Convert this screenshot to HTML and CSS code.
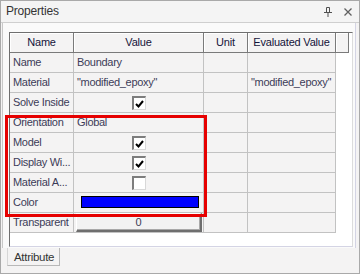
FILE: index.html
```html
<!DOCTYPE html>
<html>
<head>
<meta charset="utf-8">
<link rel="stylesheet" href="styles.css">
</head>
<body>
<div class="window">
  <div class="titlebar">
    <span class="title">Properties</span>
    <span class="tools">
      <svg class="pin" width="8" height="10" viewBox="0 0 8 10"><path d="M2.5 0.5h3v5h-3z M0 5.5h8 M4 6v4" fill="none" stroke="#505050" stroke-width="1"/></svg>
      <svg class="close" width="8" height="8" viewBox="0 0 8 8"><path d="M0.5 0.5L7.5 7.5M7.5 0.5L0.5 7.5" stroke="#606060" stroke-width="1.3"/></svg>
    </span>
  </div>
  <div class="body">
    <div class="pane">
      <div class="gridbox">
        <div class="hrow">
          <div class="hcell">Name</div>
          <div class="hcell">Value</div>
          <div class="hcell">Unit</div>
          <div class="hcell">Evaluated Value</div>
          <div class="hcell"></div>
        </div>
        <div class="row"><div class="cell">Name</div><div class="cell">Boundary</div><div class="cell"></div><div class="cell"></div></div>
        <div class="row"><div class="cell">Material</div><div class="cell">"modified_epoxy"</div><div class="cell"></div><div class="cell">"modified_epoxy"</div></div>
        <div class="row"><div class="cell">Solve Inside</div><div class="cell center"><span class="cb"><svg width="9" height="8" viewBox="0 0 9 8"><path d="M1 4l2.5 2.5L8 1" fill="none" stroke="#000" stroke-width="2"/></svg></span></div><div class="cell"></div><div class="cell"></div></div>
        <div class="row"><div class="cell">Orientation</div><div class="cell">Global</div><div class="cell"></div><div class="cell"></div></div>
        <div class="row"><div class="cell">Model</div><div class="cell center"><span class="cb"><svg width="9" height="8" viewBox="0 0 9 8"><path d="M1 4l2.5 2.5L8 1" fill="none" stroke="#000" stroke-width="2"/></svg></span></div><div class="cell"></div><div class="cell"></div></div>
        <div class="row"><div class="cell">Display Wi...</div><div class="cell center"><span class="cb"><svg width="9" height="8" viewBox="0 0 9 8"><path d="M1 4l2.5 2.5L8 1" fill="none" stroke="#000" stroke-width="2"/></svg></span></div><div class="cell"></div><div class="cell"></div></div>
        <div class="row"><div class="cell">Material A...</div><div class="cell center"><span class="cb"></span></div><div class="cell"></div><div class="cell"></div></div>
        <div class="row"><div class="cell">Color</div><div class="cell colorcell"><span class="swatch"></span></div><div class="cell"></div><div class="cell"></div></div>
        <div class="row"><div class="cell">Transparent</div><div class="cell btncell"><span class="btn">0</span></div><div class="cell"></div><div class="cell"></div></div>
      </div>
    </div>
    <div class="tabs"><div class="tab">Attribute</div></div>
  </div>
  <div class="highlight"></div>
</div>
</body>
</html>
```

FILE: styles.css
```css
* { box-sizing: border-box; }
html, body { margin: 0; padding: 0; }
body {
  width: 360px;
  height: 274px;
  background: #f0f0f0;
  font-family: "Liberation Sans", Arial, sans-serif;
  font-size: 11px;
  letter-spacing: -0.25px;
  overflow: hidden;
}
.window {
  position: relative;
  width: 360px;
  height: 274px;
  border: 1px solid #a9a9a9;
  background: #f4f3f3;
  display: flex;
  flex-direction: column;
}
.titlebar {
  height: 22px;
  flex: none;
  display: flex;
  align-items: center;
  justify-content: space-between;
  padding: 0 7px 0 5px;
  background: #f4f4f4;
  border-bottom: 1px solid #cfcfcf;
  color: #333;
  font-size: 12px;
  letter-spacing: -0.2px;
}
.title { padding-bottom: 1px; }
.tools { display: flex; align-items: center; gap: 12px; }
.pin { margin-top: 1px; }
.close { margin-top: 1px; }
.body { flex: 1; display: flex; flex-direction: column; padding-left: 1px; }
.pane {
  height: 225px;
  width: 354px;
  flex: none;
  background: #fafafa;
  border-left: 1px solid #c8c8c8;
  border-right: 1px solid #d4d4e4;
  padding: 9px 2px 1px 6px;
}
.gridbox {
  height: 215px;
  background: #fff;
  border-left: 1px solid #6f6f6f;
  border-top: 1px solid #6f6f6f;
  border-right: 1px solid #dcdcdc;
  border-bottom: 1px solid #d4d4e4;
}
.hrow {
  display: grid;
  grid-template-columns: 64px 130px 44px 88px 13px;
  height: 20px;
}
.hcell {
  background: #f4f3f3;
  border-right: 1px solid #7a7a7a;
  border-bottom: 1px solid #7a7a7a;
  box-shadow: inset 1px 1px 0 #fff;
  color: #14143a;
  display: flex;
  align-items: center;
  justify-content: center;
  padding-bottom: 1px;
  font-size: 11px;
  letter-spacing: -0.2px;
}
.row {
  display: grid;
  grid-template-columns: 64px 130px 44px 88px;
  height: 20px;
}
.cell {
  background: #f4f3f3;
  border-right: 1px solid #c2c2c2;
  border-bottom: 1px solid #c2c2c2;
  color: #3c3c58;
  padding: 0 0 1px 3px;
  display: flex;
  align-items: center;
  white-space: nowrap;
  overflow: hidden;
  font-size: 11px;
  letter-spacing: -0.3px;
}
.cell.center { justify-content: center; padding-left: 0; }
.cb {
  width: 14px;
  height: 14px;
  background: #fff;
  border-top: 2px solid #7d7d7d;
  border-left: 2px solid #7d7d7d;
  border-right: 1px solid #d8d8d8;
  border-bottom: 1px solid #d8d8d8;
  display: flex;
  align-items: center;
  justify-content: center;
  margin-top: 1px;
}
.cb svg { margin: 1px 0 0 0; }
.colorcell { padding-left: 7px; }
.swatch {
  width: 118px;
  height: 12px;
  background: #0000ff;
  border: 1px solid #000;
}
.btncell { padding: 0 1px 0 2px; align-items: stretch; }
.btn {
  flex: 1;
  background: #f2f2f2;
  border-top: 1px solid #fff;
  border-left: 1px solid #fff;
  border-right: 2px solid #6e6e6e;
  border-bottom: 2px solid #6e6e6e;
  box-shadow: inset -1px -1px 0 #a8a8a8;
  display: flex;
  align-items: center;
  justify-content: center;
  color: #3c3c58;
}
.tabs { display: flex; padding-left: 5px; }
.tab {
  width: 53px;
  height: 18px;
  background: #f4f3f3;
  border-left: 1px solid #d6d6d6;
  border-right: 1px solid #b8b8b8;
  border-bottom: 1px solid #b8b8b8;
  color: #333;
  padding: 1px 0 0 6px;
  display: flex;
  align-items: center;
  font-size: 11.5px;
  letter-spacing: -0.3px;
}
.highlight {
  position: absolute;
  left: 4px;
  top: 114px;
  width: 202px;
  height: 102px;
  border: 3px solid #e60000;
}
```
